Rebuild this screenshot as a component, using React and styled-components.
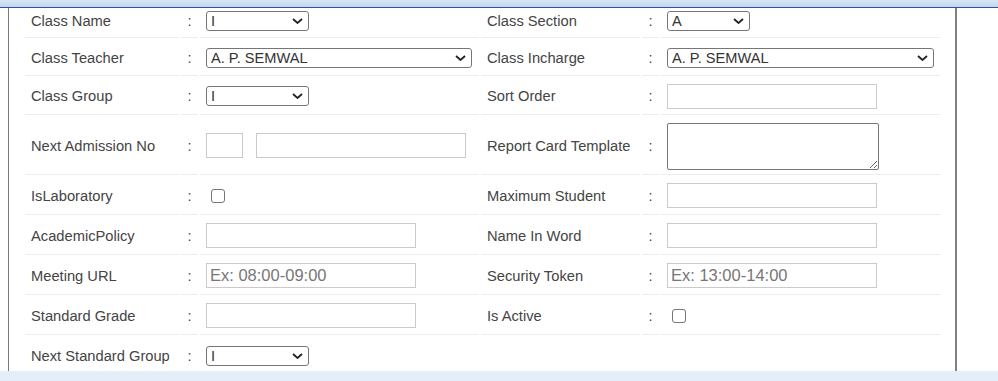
import React from "react";
import styled, { createGlobalStyle } from "styled-components";

const GlobalStyle = createGlobalStyle`
  body {
    margin: 0;
    background: #fff;
    font-family: "Liberation Sans", Arial, sans-serif;
  }
`;

const Page = styled.div`
  display: flex;
  flex-direction: column;
  width: 998px;
  height: 381px;
  overflow: hidden;
`;

const TopBar = styled.div`
  height: 7px;
  flex-shrink: 0;
  background: linear-gradient(#d7e5f6, #c2d5ee);
  border-bottom: 1px solid #2d5a8c;
`;

const Body = styled.div`
  display: flex;
  height: 363px;
  flex-shrink: 0;
`;

const Panel = styled.div`
  box-sizing: border-box;
  width: 949px;
  margin-left: 8px;
  border-left: 1px solid #7a7a7a;
  border-right: 2px solid #808080;
  overflow: hidden;
`;

const BottomBand = styled.div`
  flex: 1;
  background: #e3eef9;
`;

const FormTable = styled.table`
  table-layout: fixed;
  width: 919px;
  margin: -6px 0 0 14px;
  border-collapse: separate;
  border-spacing: 2px 0;
`;

const Row = styled.tr`
  height: ${(p) => p.$h}px;
`;

const Cell = styled.td`
  box-sizing: border-box;
  padding: 2px 6px 0;
  border-bottom: 1px solid #ededed;
  vertical-align: middle;
  font-size: 14.7px;
  color: #444;
  white-space: nowrap;
  text-align: ${(p) => (p.$center ? "center" : "left")};
`;

const SelectWrap = styled.span`
  position: relative;
  display: block;
  width: ${(p) => p.$w}px;
  height: 20px;
`;

const Select = styled.select`
  box-sizing: border-box;
  appearance: none;
  width: 100%;
  height: 20px;
  padding: 0 20px 0 4px;
  border: 1px solid #767676;
  border-radius: 3px;
  background: #fff;
  font-family: "Liberation Sans", Arial, sans-serif;
  font-size: 14.6px;
  font-weight: 400;
  color: #333;
  display: block;
  outline: none;
`;

const Arrow = styled.svg`
  position: absolute;
  right: 6px;
  top: 7px;
  width: 11px;
  height: 6px;
  pointer-events: none;
`;

const TextInput = styled.input`
  box-sizing: border-box;
  width: ${(p) => p.$w || 210}px;
  height: 25px;
  padding: 0 3px;
  margin-right: ${(p) => p.$mr || 0}px;
  border: 1px solid #cacaca;
  border-radius: 0;
  font-family: "Liberation Sans", Arial, sans-serif;
  font-size: 16.5px;
  color: #333;
  vertical-align: middle;

  &::placeholder {
    color: #777;
  }
`;

const TextArea = styled.textarea`
  box-sizing: border-box;
  display: block;
  width: 212px;
  height: 47px;
  margin-top: 1px;
  border: 1px solid #767676;
  border-radius: 2px;
  font-family: "Liberation Sans", Arial, sans-serif;
  font-size: 14px;
`;

const Check = styled.input`
  appearance: none;
  box-sizing: border-box;
  width: 14px;
  height: 14px;
  margin: 0 0 0 5px;
  border: 1px solid #767676;
  border-radius: 3px;
  background: #fff;
  display: block;
`;

const Dropdown = ({ w, value }) => (
  <SelectWrap $w={w}>
    <Select defaultValue={value}>
      <option>{value}</option>
    </Select>
    <Arrow viewBox="0 0 11 6">
      <path d="M1 1 L5.5 5 L10 1" fill="none" stroke="#222" strokeWidth="1.8" />
    </Arrow>
  </SelectWrap>
);

const Field = ({ label, children }) => (
  <>
    <Cell>{label}</Cell>
    <Cell $center>:</Cell>
    <Cell>{children}</Cell>
  </>
);

const App = () => {
  return (
    <Page>
      <GlobalStyle />
      <TopBar />
      <Body>
        <Panel>
          <FormTable>
            <colgroup>
              <col style={{ width: 154 }} />
              <col style={{ width: 17 }} />
              <col style={{ width: 279 }} />
              <col style={{ width: 159 }} />
              <col style={{ width: 17 }} />
              <col style={{ width: 279 }} />
            </colgroup>
            <tbody>
              <Row $h={36}>
                <Field label="Class Name">
                  <Dropdown w={103} value="I" />
                </Field>
                <Field label="Class Section">
                  <Dropdown w={83} value="A" />
                </Field>
              </Row>
              <Row $h={38}>
                <Field label="Class Teacher">
                  <Dropdown w={266} value="A. P. SEMWAL" />
                </Field>
                <Field label="Class Incharge">
                  <Dropdown w={267} value="A. P. SEMWAL" />
                </Field>
              </Row>
              <Row $h={39}>
                <Field label="Class Group">
                  <Dropdown w={103} value="I" />
                </Field>
                <Field label="Sort Order">
                  <TextInput />
                </Field>
              </Row>
              <Row $h={60}>
                <Field label="Next Admission No">
                  <TextInput $w={37} $mr={13} />
                  <TextInput />
                </Field>
                <Field label="Report Card Template">
                  <TextArea />
                </Field>
              </Row>
              <Row $h={40}>
                <Field label="IsLaboratory">
                  <Check type="checkbox" />
                </Field>
                <Field label="Maximum Student">
                  <TextInput />
                </Field>
              </Row>
              <Row $h={40}>
                <Field label="AcademicPolicy">
                  <TextInput />
                </Field>
                <Field label="Name In Word">
                  <TextInput />
                </Field>
              </Row>
              <Row $h={40}>
                <Field label="Meeting URL">
                  <TextInput placeholder="Ex: 08:00-09:00" />
                </Field>
                <Field label="Security Token">
                  <TextInput placeholder="Ex: 13:00-14:00" />
                </Field>
              </Row>
              <Row $h={40}>
                <Field label="Standard Grade">
                  <TextInput />
                </Field>
                <Field label="Is Active">
                  <Check type="checkbox" />
                </Field>
              </Row>
              <Row $h={40}>
                <Field label="Next Standard Group">
                  <Dropdown w={103} value="I" />
                </Field>
                <Cell />
                <Cell />
                <Cell />
              </Row>
            </tbody>
          </FormTable>
        </Panel>
      </Body>
      <BottomBand />
    </Page>
  );
};

export default App;
